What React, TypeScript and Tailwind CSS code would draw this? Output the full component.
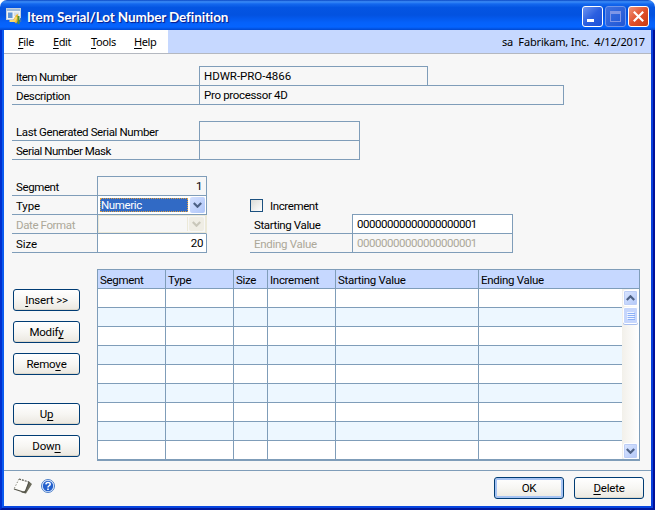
import React from 'react';
import { clsx } from 'clsx';

const line = 'border-[#7f9db9]';

function Text({ children, className }: { children: React.ReactNode; className?: string }) {
  return <span className={clsx('block whitespace-pre leading-[14px]', className)}>{children}</span>;
}

function Mnemonic({ before = '', letter, after = '' }: { before?: string; letter: string; after?: string }) {
  return (
    <>
      {before}
      <span className="underline underline-offset-[1.5px] decoration-1">{letter}</span>
      {after}
    </>
  );
}

type FieldRowProps = {
  label: string;
  first?: boolean;
  disabled?: boolean;
  labelClass: string;
  fieldClass: string;
  textClass?: string;
  children?: React.ReactNode;
};

function FieldRow({ label, first, disabled, labelClass, fieldClass, textClass, children }: FieldRowProps) {
  return (
    <div className={clsx('flex', first ? 'h-5' : 'h-[19px]', disabled && 'text-[#aca899]')}>
      <div className={clsx('flex items-end border-b pb-px', line, labelClass)}>
        <Text className={textClass}>{label}</Text>
      </div>
      <div className={clsx('flex items-end border-x border-b', first && 'border-t', line, fieldClass)}>{children}</div>
    </div>
  );
}

function Chevron({ up }: { up?: boolean }) {
  return (
    <svg viewBox="0 0 9 6" className="h-[6px] w-[9px]" fill="none" stroke="currentColor" strokeWidth="2.2">
      <path d={up ? 'M0.8 5 4.5 1.3 8.2 5' : 'M0.8 1 4.5 4.7 8.2 1'} />
    </svg>
  );
}

function Button({ children, primary, className }: { children: React.ReactNode; primary?: boolean; className: string }) {
  return (
    <button
      className={clsx(
        'flex h-[22px] items-center justify-center rounded-[3px] border border-[#003c74] bg-gradient-to-b from-white via-[#f7f6f3] to-[#ebe8e0] tracking-[-0.2px]',
        primary ? 'shadow-[inset_0_0_0_2px_#a6c3f3]' : 'shadow-[inset_0_-1px_0_#dcd7cb]',
        className,
      )}
    >
      <Text>{children}</Text>
    </button>
  );
}

function ScrollButton({ up }: { up?: boolean }) {
  return (
    <div className="mx-px flex h-4 w-[15px] items-center justify-center rounded-[2px] border border-white bg-gradient-to-br from-[#dbe6ff] to-[#b3c8f8] text-[#4d6185] shadow-[inset_0_0_0_1px_#bccdf6]">
      <Chevron up={up} />
    </div>
  );
}

function AppIcon() {
  return (
    <svg viewBox="0 0 16 16" className="h-4 w-4">
      <rect x="0.5" y="0.5" width="14" height="11" fill="#eef2f6" stroke="#c3cfdd" />
      <path d="M1 1h13v2H1z" fill="#9dbadb" />
      <path d="M2 4.5h4.5V10H2z" fill="#5f95d6" />
      <path d="M8 4.5h5V8H8z" fill="#d5dde4" />
      <path d="M7 12.5 10 7l2-1v7l-2 2.5z" fill="#efb72d" />
      <path d="M3.5 13h5l2-4" stroke="#f6d870" strokeWidth="2" fill="none" />
      <path d="M12.5 8v8" stroke="#57912f" strokeWidth="2" />
      <path d="M14.6 10v4" stroke="#3975bd" strokeWidth="1.4" />
    </svg>
  );
}

function NoteIcon() {
  return (
    <svg viewBox="0 0 20 16" className="h-4 w-5">
      <path d="M6 1 16 4 12 14 1 11Z" fill="#fcfcfa" />
      <path d="M16 3.5 19 6 13 15.5 8 14.5 12.5 12.5Z" fill="#6c6c5c" />
      <path d="M6 1 16 4" stroke="#55554b" strokeWidth="1.2" strokeDasharray="2 1" />
      <path d="M6 1 1 11" stroke="#8b8b80" strokeDasharray="1.5 1.5" />
      <path d="M1 11 12 14.5 16 4" stroke="#55554b" strokeWidth="1.2" fill="none" />
    </svg>
  );
}

function HelpIcon() {
  return (
    <svg viewBox="0 0 14 14" className="h-[14px] w-[14px]">
      <circle cx="7" cy="7" r="6.5" fill="#e9f1ff" stroke="#4d7fc8" />
      <circle cx="7" cy="7" r="5.2" fill="#2360cd" />
      <path d="M4.9 5.4c.1-2.7 4.3-2.6 4.3-.2C9.2 6.8 7 6.7 7 8.4" fill="none" stroke="#fff" strokeWidth="1.5" />
      <path d="M6.2 9.5h1.6V11H6.2z" fill="#fff" />
    </svg>
  );
}

function TitleBar() {
  const box = 'flex h-[21px] w-[21px] rounded-[3px] border';
  return (
    <div className="flex h-[30px] items-center rounded-t-[7px] bg-[linear-gradient(180deg,#0a47c4_0%,#3b8cf8_6%,#1468ee_13%,#0455e2_25%,#0352e0_50%,#0561fa_75%,#0564ff_90%,#0148cf_100%)] pl-[6px] pr-[6px]">
      <div className="pt-[2px]"><AppIcon /></div>
      <span className="ml-[5px] mt-[4px] whitespace-pre font-['Lato','Open_Sans',sans-serif] text-[13.5px] font-bold leading-4 tracking-[-0.12px] text-white [text-shadow:1px_1px_1px_#0a1883]">
        Item Serial/Lot Number Definition
      </span>
      <div className="ml-auto mt-[3px] flex gap-[2px]">
        <div className={clsx(box, 'items-end border-white bg-gradient-to-br from-[#6d93f0] via-[#2b5fe0] to-[#1a50d8] pb-[4px] pl-[4px]')}>
          <div className="h-[3px] w-[7px] bg-white" />
        </div>
        <div className={clsx(box, 'items-center justify-center border-[#6f95ea] bg-gradient-to-br from-[#3d70e0] to-[#1f56d6]')}>
          <div className="h-[11px] w-[11px] border border-t-[3px] border-[#7f96e6]" />
        </div>
        <div className={clsx(box, 'items-center justify-center border-white bg-gradient-to-br from-[#ef9277] via-[#e0502b] to-[#c73a10]')}>
          <svg viewBox="0 0 11 11" className="h-[11px] w-[11px]" stroke="#fff" strokeWidth="2.2">
            <path d="M.8.8 10.2 10.2M10.2.8.8 10.2" />
          </svg>
        </div>
      </div>
    </div>
  );
}

function MenuBar() {
  return (
    <div className="flex h-6 border-b border-[#b4b8c0] bg-[#c6d8ff] font-['Noto_Sans',sans-serif] text-[11px]">
      <div className="flex w-[164px] items-center bg-white pl-[14px] pt-px tracking-[-0.4px]">
        <Text className="w-[35px]"><Mnemonic letter="F" after="ile" /></Text>
        <Text className="w-[38px]"><Mnemonic letter="E" after="dit" /></Text>
        <Text className="w-[43px]"><Mnemonic letter="T" after="ools" /></Text>
        <Text><Mnemonic letter="H" after="elp" /></Text>
      </div>
      <Text className="ml-auto mt-[5px] pr-[6px] tracking-[-0.17px]">{'sa  Fabrikam, Inc.  4/12/2017'}</Text>
    </div>
  );
}

const columns = ['Segment', 'Type', 'Size', 'Increment', 'Starting Value', 'Ending Value'];
const rows = [0, 1, 2, 3, 4, 5, 6, 7, 8];

function SegmentTable() {
  return (
    <div className={clsx('h-[192px] w-[543px] border border-b-2 bg-white', line)}>
      <div className={clsx('grid h-[19px] grid-cols-[68px_68px_34px_68px_143px_1fr] border-b bg-[#c6d8ff] tracking-[-0.3px]', line)}>
        {columns.map((name) => (
          <div key={name} className={clsx('border-r pl-[2px] pt-[3px] last:border-r-0', line)}>
            <Text>{name}</Text>
          </div>
        ))}
      </div>
      <div className="flex h-[170px]">
        <div className="flex-1 overflow-hidden">
          {rows.map((row) => (
            <div
              key={row}
              className={clsx(
                'grid h-[19px] grid-cols-[68px_68px_34px_68px_143px_1fr] border-b',
                line,
                row % 2 === 1 ? 'bg-[#edf7ff]' : 'bg-white',
              )}
            >
              {columns.map((name) => (
                <div key={name} className={clsx('border-r last:border-r-0', line)} />
              ))}
            </div>
          ))}
        </div>
        <div className="flex w-[17px] flex-col bg-gradient-to-r from-[#f2f0ea] to-white pt-px">
          <ScrollButton up />
          <div className="mx-px mt-px flex h-[17px] w-[15px] flex-col items-center justify-center gap-px rounded-[2px] border border-white bg-[#c6d6fc] shadow-[0_1px_0_#a9bfee]">
            {[0, 1, 2, 3].map((grip) => (
              <div key={grip} className="h-px w-[7px] bg-[#f0f5ff] shadow-[1px_1px_0_#8cb0f8]" />
            ))}
          </div>
          <div className="mt-auto"><ScrollButton /></div>
        </div>
      </div>
    </div>
  );
}

function Dropdown({ disabled, value }: { disabled?: boolean; value?: string }) {
  return (
    <div className={clsx('flex h-[18px] flex-1 items-center p-[1px]', disabled ? 'border border-[#ece9d8]' : 'bg-white')}>
      <div
        className={clsx(
          'h-[14px] w-[88px]',
          disabled ? 'border-r border-[#ece9d8]' : 'ml-px border border-dotted border-[#e0a040] bg-[#316ac5] text-white',
        )}
      >
        <Text className="-mt-px leading-[13px] tracking-[-0.35px]">{value}</Text>
      </div>
      <div
        className={clsx(
          'ml-auto flex w-[15px] items-center justify-center rounded-[2px]',
          disabled ? 'h-[14px] bg-[#efede4] text-[#c9c7ba]' : 'h-4 bg-gradient-to-br from-[#d3e0ff] to-[#b0c6f8] text-[#4d6185]',
        )}
      >
        <Chevron />
      </div>
    </div>
  );
}

export default function App() {
  return (
    <div className="flex h-[510px] w-[655px] flex-col overflow-hidden bg-white font-['Roboto','Liberation_Sans',sans-serif] text-[11.5px] tracking-[-0.39px] text-black">
      <TitleBar />
      <div className="flex flex-1 flex-col border-x-2 border-b-2 border-l-[#0030d0] border-r-[#00109a] border-b-[#00189c]">
        <div className="flex flex-1 flex-col border-x-2 border-b-2 border-l-[#0a5af0] border-r-[#0840dc] border-b-[#0846e0] bg-[#f7f7f7]">
          <MenuBar />
          <main className="px-2 pt-3">
            <section>
              <FieldRow first label="Item Number" textClass="tracking-[-0.58px]" labelClass="w-[187px] pl-1" fieldClass="w-[229px] pl-1 pb-[2px]">
                <Text className="tracking-[-0.03px]">HDWR-PRO-4866</Text>
              </FieldRow>
              <div className="flex">
                <FieldRow label="Description" labelClass="w-[187px] pl-1" fieldClass="w-[229px] border-r-0 pl-1 pb-[2px]">
                  <Text className="tracking-[-0.32px]">Pro processor 4D</Text>
                </FieldRow>
                <div className={clsx('-mt-px h-5 w-[136px] border border-l-0', line)} />
              </div>
            </section>
            <section className="mt-4">
              <FieldRow first label="Last Generated Serial Number" labelClass="w-[187px] pl-1" fieldClass="w-[161px]" />
              <FieldRow label="Serial Number Mask" textClass="tracking-[-0.48px]" labelClass="w-[187px] pl-1" fieldClass="w-[161px]" />
            </section>
            <section className="mt-4 flex">
              <div>
                <FieldRow first label="Segment" labelClass="w-[85px] pl-1" fieldClass="w-[110px] justify-end pr-1 pb-[2px]">
                  <Text>1</Text>
                </FieldRow>
                <FieldRow label="Type" textClass="tracking-[-0.1px]" labelClass="w-[85px] pl-1" fieldClass="w-[110px]">
                  <Dropdown value="Numeric" />
                </FieldRow>
                <FieldRow disabled label="Date Format" labelClass="w-[85px] pl-1" fieldClass="w-[110px] border-r-[#ece9d8]">
                  <Dropdown disabled />
                </FieldRow>
                <FieldRow label="Size" textClass="tracking-[-0.1px]" labelClass="w-[85px] pl-1" fieldClass="w-[110px] justify-end bg-white pr-[3px] pb-[2px]">
                  <Text>20</Text>
                </FieldRow>
              </div>
              <div className="ml-[43px] pt-[23px]">
                <div className="flex h-[15px] items-start">
                  <div className="h-[13px] w-[13px] border border-[#1c5180] bg-gradient-to-br from-[#dcdcd7] to-white" />
                  <Text className="ml-[7px]">Increment</Text>
                </div>
                <FieldRow first label="Starting Value" textClass="tracking-[-0.38px]" labelClass="w-[102px] pl-1" fieldClass="w-[161px] bg-white pl-1 pb-[2px]">
                  <Text className="tracking-[-0.47px]">00000000000000000001</Text>
                </FieldRow>
                <FieldRow disabled label="Ending Value" textClass="tracking-[-0.3px]" labelClass="w-[102px] pl-1" fieldClass="w-[161px] pl-1 pb-[2px]">
                  <Text className="tracking-[-0.47px]">00000000000000000001</Text>
                </FieldRow>
              </div>
            </section>
            <section className="mt-4 flex">
              <div className="flex w-[85px] flex-col gap-[10px] pl-px pt-5">
                <Button className="w-[67px]"><Mnemonic letter="I" after="nsert >>" /></Button>
                <Button className="w-[67px]"><Mnemonic before="Modif" letter="y" /></Button>
                <Button className="w-[67px]"><Mnemonic before="Remo" letter="v" after="e" /></Button>
                <Button className="mt-[18px] w-[67px]"><Mnemonic before="U" letter="p" /></Button>
                <Button className="w-[67px]"><Mnemonic before="Dow" letter="n" /></Button>
              </div>
              <SegmentTable />
            </section>
          </main>
          <footer className={clsx('mt-[9px] flex flex-1 items-start border-t pl-[9px] pr-[7px] pt-[6px]', line)}>
            <div className="mt-px"><NoteIcon /></div>
            <div className="ml-[8px] mt-[2px]"><HelpIcon /></div>
            <Button primary className="ml-auto w-[70px]">OK</Button>
            <Button className="ml-[10px] w-[70px]"><Mnemonic letter="D" after="elete" /></Button>
          </footer>
        </div>
      </div>
    </div>
  );
}
